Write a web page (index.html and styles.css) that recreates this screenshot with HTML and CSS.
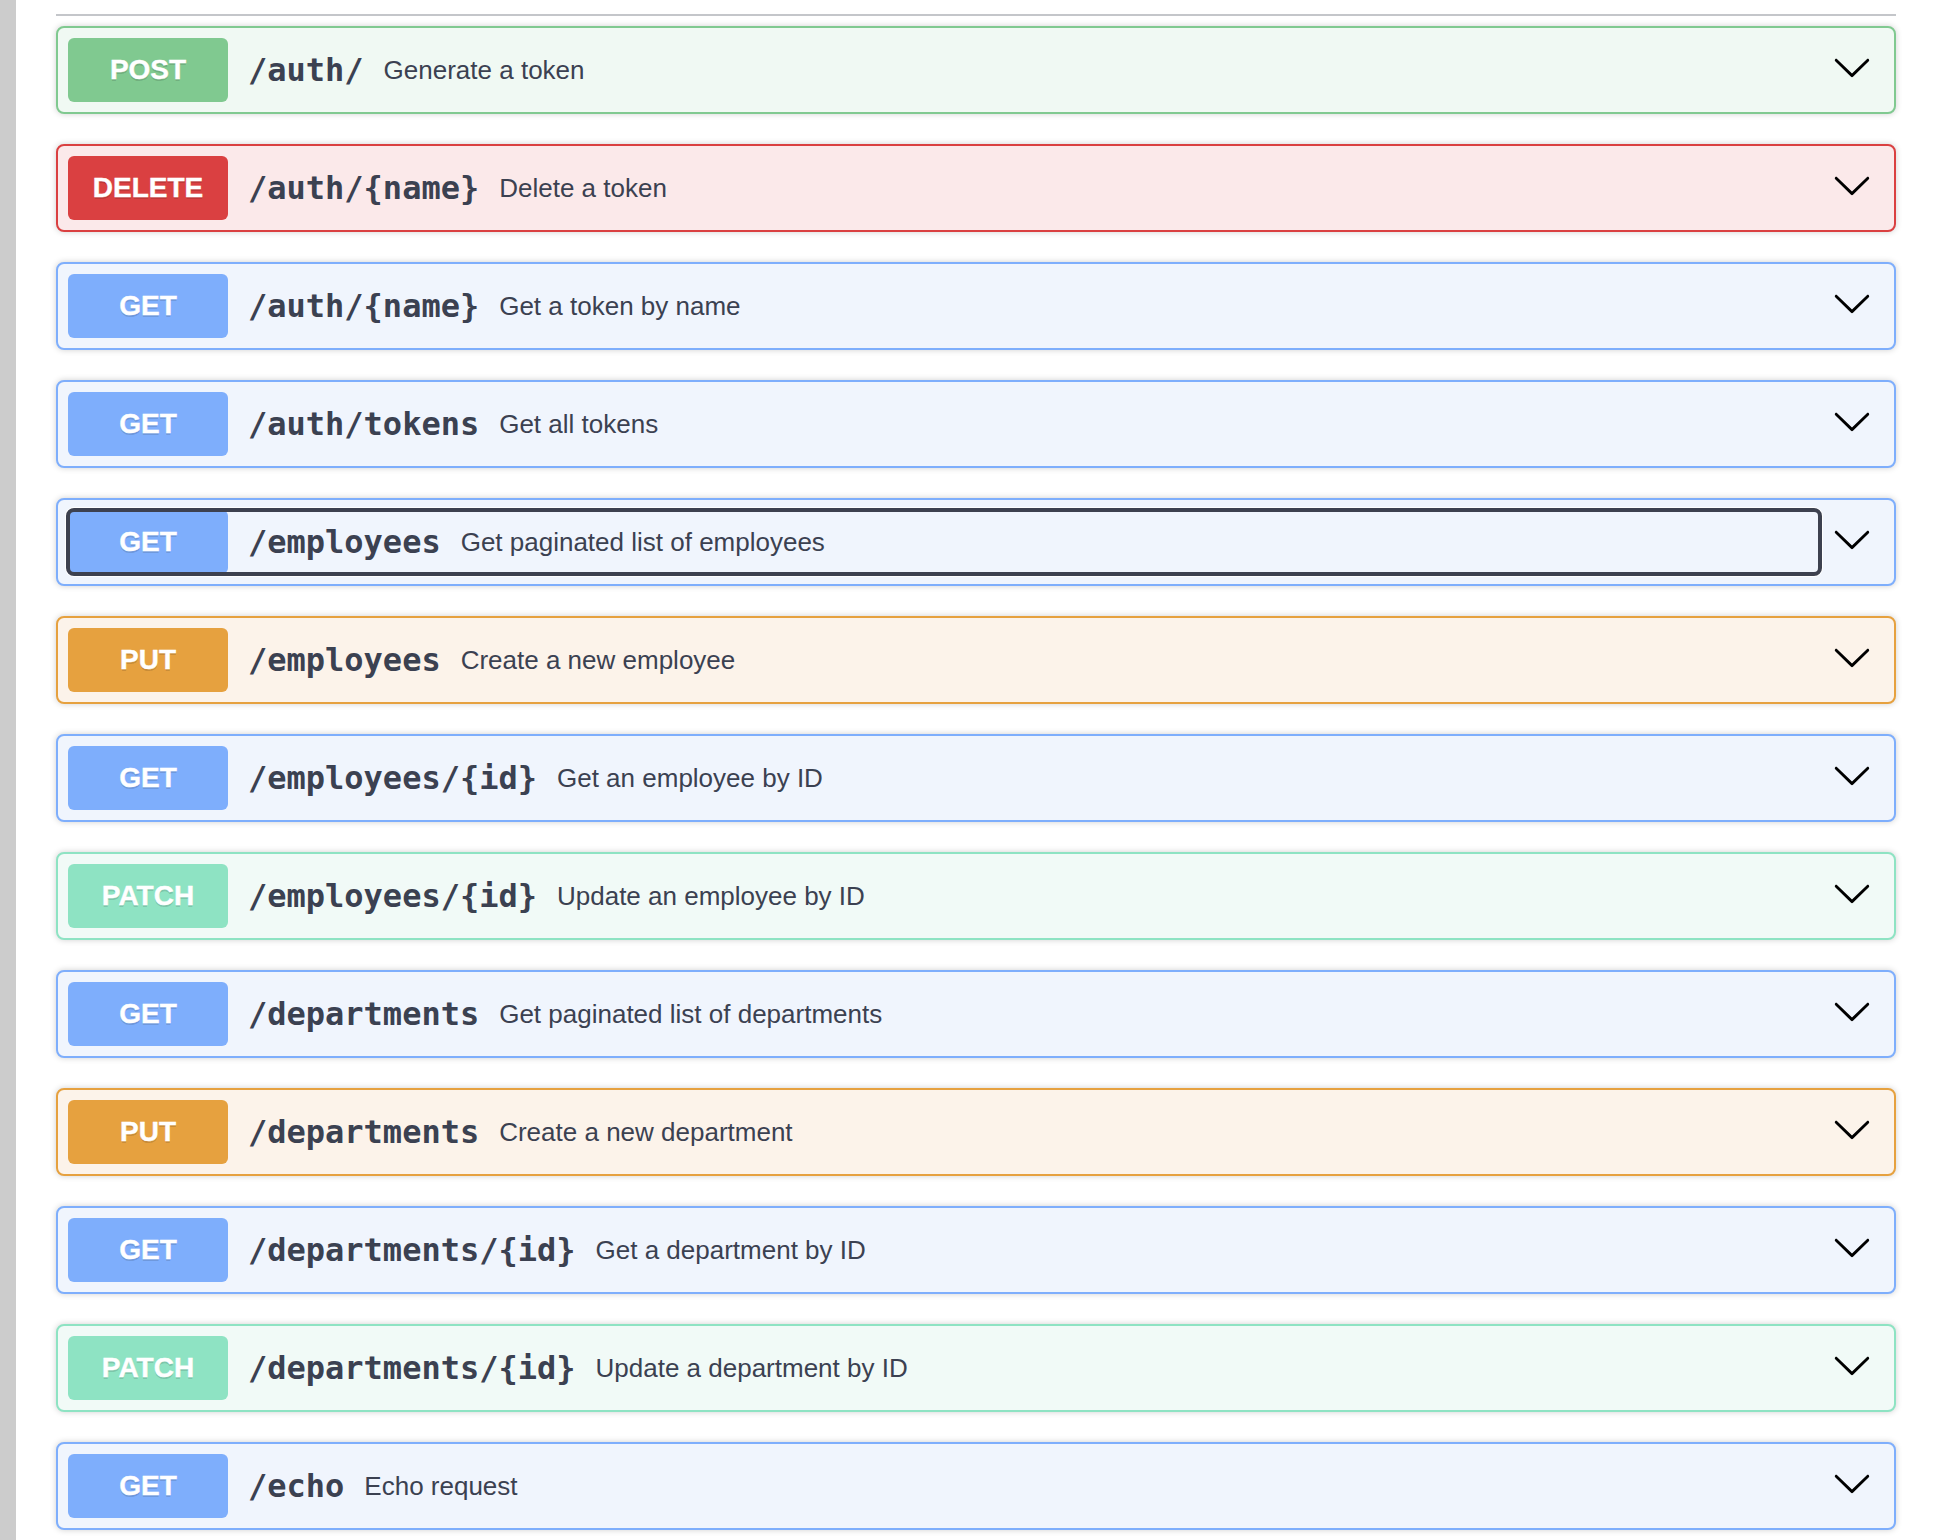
FILE: index.html
```html
<!DOCTYPE html>
<html lang="en">
<head>
<meta charset="utf-8">
<title>API operations</title>
<link rel="stylesheet" href="styles.css">
</head>
<body>
<div class="page">
  <div class="sidebar"></div>
  <main class="content">
    <div class="tag-line"></div>
    <div class="ops">
      <div class="opblock post"><div class="summary"><div class="control"><span class="method">POST</span><span class="path">/auth/</span><span class="desc">Generate a token</span></div><span class="arrow"><svg viewBox="0 0 20 20" width="40" height="40"><path d="M17.418 6.109c.272-.268.709-.268.979 0s.271.701 0 .969l-7.908 7.83c-.27.268-.707.268-.979 0l-7.908-7.830c-.27-.268-.27-.701 0-.969.271-.268.709-.268.979 0L10 13.25l7.418-7.141z"/></svg></span></div></div>
      <div class="opblock delete"><div class="summary"><div class="control"><span class="method">DELETE</span><span class="path">/auth/{name}</span><span class="desc">Delete a token</span></div><span class="arrow"><svg viewBox="0 0 20 20" width="40" height="40"><path d="M17.418 6.109c.272-.268.709-.268.979 0s.271.701 0 .969l-7.908 7.83c-.27.268-.707.268-.979 0l-7.908-7.83c-.27-.268-.27-.701 0-.969.271-.268.709-.268.979 0L10 13.25l7.418-7.141z"/></svg></span></div></div>
      <div class="opblock get"><div class="summary"><div class="control"><span class="method">GET</span><span class="path">/auth/{name}</span><span class="desc">Get a token by name</span></div><span class="arrow"><svg viewBox="0 0 20 20" width="40" height="40"><path d="M17.418 6.109c.272-.268.709-.268.979 0s.271.701 0 .969l-7.908 7.83c-.27.268-.707.268-.979 0l-7.908-7.83c-.27-.268-.27-.701 0-.969.271-.268.709-.268.979 0L10 13.25l7.418-7.141z"/></svg></span></div></div>
      <div class="opblock get"><div class="summary"><div class="control"><span class="method">GET</span><span class="path">/auth/tokens</span><span class="desc">Get all tokens</span></div><span class="arrow"><svg viewBox="0 0 20 20" width="40" height="40"><path d="M17.418 6.109c.272-.268.709-.268.979 0s.271.701 0 .969l-7.908 7.83c-.27.268-.707.268-.979 0l-7.908-7.83c-.27-.268-.27-.701 0-.969.271-.268.709-.268.979 0L10 13.25l7.418-7.141z"/></svg></span></div></div>
      <div class="opblock get"><div class="summary"><div class="control focused"><span class="method">GET</span><span class="path">/employees</span><span class="desc">Get paginated list of employees</span></div><span class="arrow"><svg viewBox="0 0 20 20" width="40" height="40"><path d="M17.418 6.109c.272-.268.709-.268.979 0s.271.701 0 .969l-7.908 7.83c-.27.268-.707.268-.979 0l-7.908-7.83c-.27-.268-.27-.701 0-.969.271-.268.709-.268.979 0L10 13.25l7.418-7.141z"/></svg></span></div></div>
      <div class="opblock put"><div class="summary"><div class="control"><span class="method">PUT</span><span class="path">/employees</span><span class="desc">Create a new employee</span></div><span class="arrow"><svg viewBox="0 0 20 20" width="40" height="40"><path d="M17.418 6.109c.272-.268.709-.268.979 0s.271.701 0 .969l-7.908 7.83c-.27.268-.707.268-.979 0l-7.908-7.83c-.27-.268-.27-.701 0-.969.271-.268.709-.268.979 0L10 13.25l7.418-7.141z"/></svg></span></div></div>
      <div class="opblock get"><div class="summary"><div class="control"><span class="method">GET</span><span class="path">/employees/{id}</span><span class="desc">Get an employee by ID</span></div><span class="arrow"><svg viewBox="0 0 20 20" width="40" height="40"><path d="M17.418 6.109c.272-.268.709-.268.979 0s.271.701 0 .969l-7.908 7.83c-.27.268-.707.268-.979 0l-7.908-7.83c-.27-.268-.27-.701 0-.969.271-.268.709-.268.979 0L10 13.25l7.418-7.141z"/></svg></span></div></div>
      <div class="opblock patch"><div class="summary"><div class="control"><span class="method">PATCH</span><span class="path">/employees/{id}</span><span class="desc">Update an employee by ID</span></div><span class="arrow"><svg viewBox="0 0 20 20" width="40" height="40"><path d="M17.418 6.109c.272-.268.709-.268.979 0s.271.701 0 .969l-7.908 7.83c-.27.268-.707.268-.979 0l-7.908-7.83c-.27-.268-.27-.701 0-.969.271-.268.709-.268.979 0L10 13.25l7.418-7.141z"/></svg></span></div></div>
      <div class="opblock get"><div class="summary"><div class="control"><span class="method">GET</span><span class="path">/departments</span><span class="desc">Get paginated list of departments</span></div><span class="arrow"><svg viewBox="0 0 20 20" width="40" height="40"><path d="M17.418 6.109c.272-.268.709-.268.979 0s.271.701 0 .969l-7.908 7.83c-.27.268-.707.268-.979 0l-7.908-7.83c-.27-.268-.27-.701 0-.969.271-.268.709-.268.979 0L10 13.25l7.418-7.141z"/></svg></span></div></div>
      <div class="opblock put"><div class="summary"><div class="control"><span class="method">PUT</span><span class="path">/departments</span><span class="desc">Create a new department</span></div><span class="arrow"><svg viewBox="0 0 20 20" width="40" height="40"><path d="M17.418 6.109c.272-.268.709-.268.979 0s.271.701 0 .969l-7.908 7.83c-.27.268-.707.268-.979 0l-7.908-7.83c-.27-.268-.27-.701 0-.969.271-.268.709-.268.979 0L10 13.25l7.418-7.141z"/></svg></span></div></div>
      <div class="opblock get"><div class="summary"><div class="control"><span class="method">GET</span><span class="path">/departments/{id}</span><span class="desc">Get a department by ID</span></div><span class="arrow"><svg viewBox="0 0 20 20" width="40" height="40"><path d="M17.418 6.109c.272-.268.709-.268.979 0s.271.701 0 .969l-7.908 7.83c-.27.268-.707.268-.979 0l-7.908-7.83c-.27-.268-.27-.701 0-.969.271-.268.709-.268.979 0L10 13.25l7.418-7.141z"/></svg></span></div></div>
      <div class="opblock patch"><div class="summary"><div class="control"><span class="method">PATCH</span><span class="path">/departments/{id}</span><span class="desc">Update a department by ID</span></div><span class="arrow"><svg viewBox="0 0 20 20" width="40" height="40"><path d="M17.418 6.109c.272-.268.709-.268.979 0s.271.701 0 .969l-7.908 7.83c-.27.268-.707.268-.979 0l-7.908-7.83c-.27-.268-.27-.701 0-.969.271-.268.709-.268.979 0L10 13.25l7.418-7.141z"/></svg></span></div></div>
      <div class="opblock get"><div class="summary"><div class="control"><span class="method">GET</span><span class="path">/echo</span><span class="desc">Echo request</span></div><span class="arrow"><svg viewBox="0 0 20 20" width="40" height="40"><path d="M17.418 6.109c.272-.268.709-.268.979 0s.271.701 0 .969l-7.908 7.83c-.27.268-.707.268-.979 0l-7.908-7.83c-.27-.268-.27-.701 0-.969.271-.268.709-.268.979 0L10 13.25l7.418-7.141z"/></svg></span></div></div>
    </div>
  </main>
</div>
</body>
</html>
```

FILE: styles.css
```css
html, body {
  margin: 0;
  padding: 0;
  background: #ffffff;
  height: 100%;
  overflow: hidden;
}

.page {
  display: flex;
  min-height: 1540px;
}

.sidebar {
  width: 16px;
  flex: 0 0 16px;
  background: #cccccc;
}

.content {
  width: 1840px;
  margin-left: 40px;
  padding-top: 14px;
}

.tag-line {
  height: 2px;
  background: rgba(59, 65, 81, 0.3);
}

.ops {
  display: flex;
  flex-direction: column;
  gap: 30px;
  padding-top: 10px;
}

.opblock {
  border: 2px solid;
  border-radius: 8px;
  box-shadow: 0 0 6px rgba(0, 0, 0, 0.19);
}

.summary {
  display: flex;
  align-items: center;
  padding: 10px;
}

.control {
  flex: 1;
  display: flex;
  align-items: center;
  border-radius: 6px;
  min-width: 0;
}

.control.focused {
  outline: 4px solid #3d414f;
  outline-offset: -2px;
  box-shadow: 0 0 0 3px #ffffff;
}

.method {
  width: 160px;
  height: 64px;
  flex: 0 0 160px;
  display: flex;
  align-items: center;
  justify-content: center;
  border-radius: 6px;
  color: #ffffff;
  font-family: "Liberation Sans", Arial, sans-serif;
  font-size: 28px;
  font-weight: 700;
  -webkit-text-stroke: 0.4px #ffffff;
  text-shadow: 0 2px 0 rgba(0, 0, 0, 0.14);
}

.path {
  padding: 0 20px;
  font-family: "DejaVu Sans Mono", monospace;
  font-size: 32px;
  font-weight: 700;
  color: #3b4151;
  white-space: nowrap;
}

.desc {
  font-family: "Liberation Sans", Arial, sans-serif;
  font-size: 26px;
  color: #3b4151;
  white-space: nowrap;
}

.arrow {
  display: flex;
  align-items: center;
  padding: 0 12px;
}

.arrow svg {
  display: block;
  margin-bottom: 6px;
  fill: #000000;
}

.post { border-color: #80c990; background: #f0f9f3; }
.post .method { background: #80c990; }

.delete { border-color: #da4041; background: #fbe9ea; }
.delete .method { background: #da4041; }

.get { border-color: #7eaefc; background: #f0f5fd; }
.get .method { background: #7eaefc; }

.put { border-color: #e6a13f; background: #fcf3ea; }
.put .method { background: #e6a13f; }

.patch { border-color: #8ee3c3; background: #f1faf7; }
.patch .method { background: #8ee3c3; }
```
